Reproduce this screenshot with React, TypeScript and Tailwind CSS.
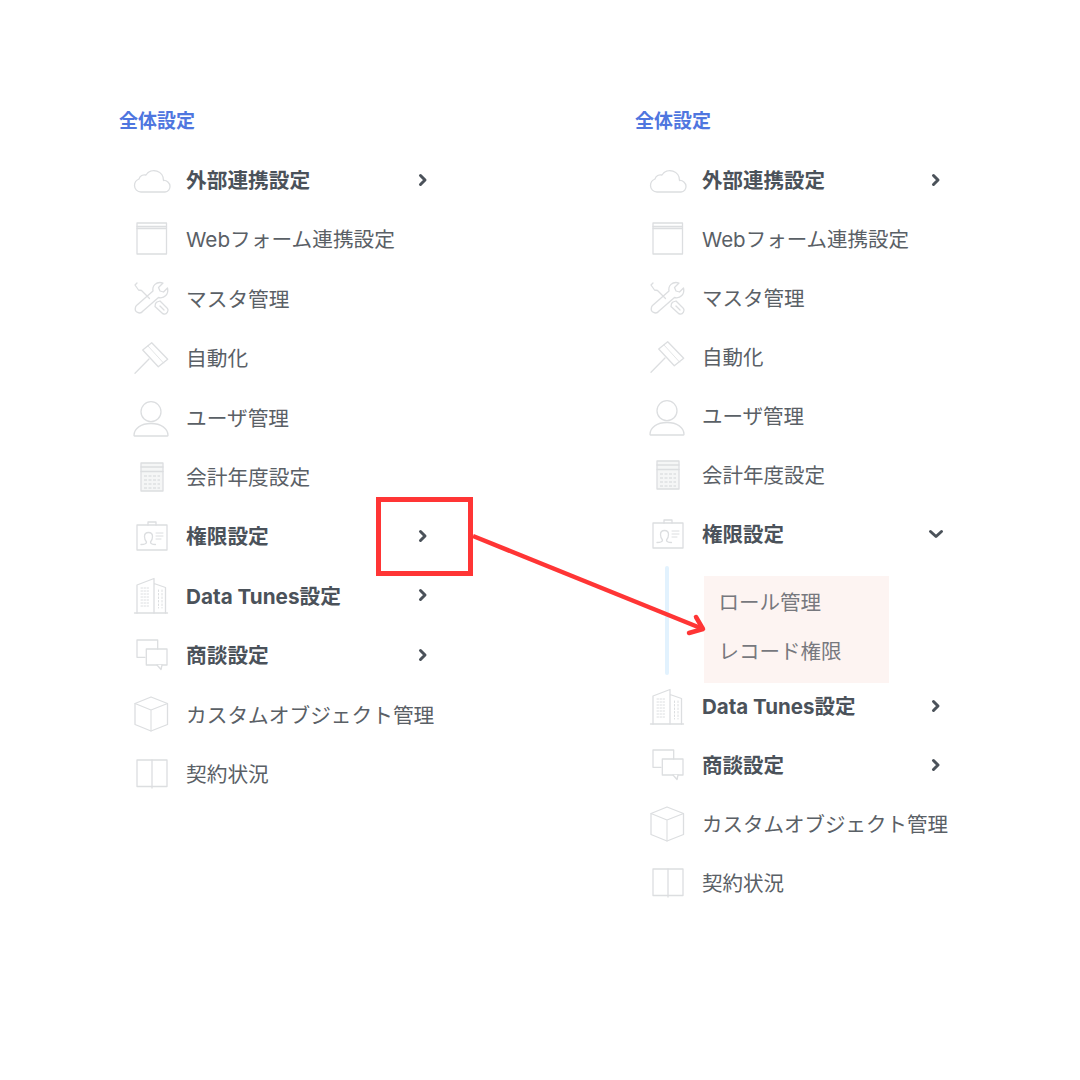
import React from "react";

const Svg = ({ children }: { children: React.ReactNode }) => (
  <svg width="40" height="40" viewBox="0 0 40 40" fill="none" stroke="#dcdee0" strokeWidth="1.300" strokeLinecap="round" strokeLinejoin="round">
    {children}
  </svg>
);

const icons: Record<string, React.ReactNode> = {
  cloud: <Svg><path d="M10 32h24a5.500 5.500 0 0 0 5-6 6 6 0 0 0-6.500-5.500a9.500 9.500 0 0 0-17.500-5.500a6 6 0 0 0-7 4a7 7 0 0 0-4.500 6.500a6.500 6.500 0 0 0 6.500 6.500z" /></Svg>,
  window: <Svg><rect x="6" y="4" width="29.500" height="31" /><path d="M6 7.500h29.500M6 9.500h29.500" /></Svg>,
  tools: <Svg><path d="M6 5l-2 2 3.500 5 3 .5 8 8M26 24l3-1 7.500 7.500c1.500 2-.5 6-3.500 5.500-1 0-1.500-.5-2-1L24 28.500l.5-3 1.500-1.500z" /><path d="M22 13c-1-5 3-10 10-8l-4.500 4.500 1.500 3.500 3.500 1 4-4c1.500 6-3 11-9 9.500L12 33c-3 4-9 1-7.500-3.500 0-1 .5-1.500 1-2L22 13z" /><path d="M29 28l4 4" /></Svg>,
  gavel: <Svg><path d="M20.700 4.700L36.700 21.300L27.300 28.700L11.700 12Z" /><path d="M17 8l15.500 17" strokeWidth="0.800" /><path d="M4 35.300L18 21" /></Svg>,
  user: <Svg><circle cx="20" cy="14.700" r="10" /><path d="M3 38.500c0-7 7-12 17-12s17 5 17 12c0 .3-.2.500-.5.500h-33c-.3 0-.5-.2-.5-.5z" /></Svg>,
  calc: <Svg><rect x="10" y="6" width="22" height="28" fill="#f5f6f6" /><path d="M10 10h22M10 14.500h22" /><path d="M13 19h16M13 23h16M13 27h16M13 31h16" strokeDasharray="3 1.500" strokeWidth="2.200" strokeLinecap="butt" stroke="#e4e6e7" /></Svg>,
  card: <Svg><rect x="6" y="9" width="30" height="25" /><path d="M17 9V6h8v3" /><path d="M10 28.500c3 0 5.500-1 5.500-2.500c-1.500-1.500-2-3-2-5.500c0-2.500 1.500-4 4-4s4 1.500 4 4c0 2.500-.5 4-2 5.500c0 1.500 2.500 2.500 5 2.500" /><path d="M25 17h7M25 20h7M25 23h5" strokeWidth="1" /></Svg>,
  building: <Svg><path d="M3.500 38h33" /><path d="M6 38V10l17-6.500V38M23 8.500l11.500 4V38" /><path d="M10 13h9M10 16h9M10 19h9M10 22h9M10 25h9M10 28h9M10 31h9" strokeDasharray="1.500 1.500" strokeWidth="1" /><path d="M27.500 15v18M31 15v18" strokeDasharray="1.500 2" strokeWidth="1" /></Svg>,
  chat: <Svg><path d="M14 22.300H6V5h20.700v9" /><rect x="15.300" y="14" width="20.700" height="16" /><path d="M26 30l4 4.500 1-4.500" fill="#fff" /></Svg>,
  cube: <Svg><path d="M20 3L36.500 9.500V30.500L20 37L4 30.500V9.500Z" /><path d="M4 9.500L20 16L36.500 9.500M20 16V37" strokeWidth="1.100" /></Svg>,
  book: <Svg><rect x="6" y="6" width="30" height="26.500" /><path d="M21 6v28" /></Svg>,
};

const Chevron = ({ open }: { open?: boolean }) => (
  <svg width="16" height="16" viewBox="0 0 16 16" fill="none" stroke="#4b525a" strokeWidth="3" strokeLinecap="round" strokeLinejoin="round">
    <path d={open ? "M2.500 5.500L8 10.500L13.500 5.500" : "M5.500 3.500L10 8L5.500 12.500"} />
  </svg>
);

type RowProps = { icon: string; label: string; bold?: boolean; chevron?: boolean; open?: boolean; pitch: string; width: string; size: string };

const Row = ({ icon, label, bold, chevron, open, pitch, width, size }: RowProps) => (
  <div className={`flex items-center ${pitch} ${width}`}>
    <div className="ml-[12px] mr-[15px] flex-none w-[40px] h-[40px]">{icons[icon]}</div>
    <span className={`flex-1 whitespace-nowrap pt-[3.500px] ${size} leading-none ${bold ? "font-bold text-[#4b525a]" : "font-normal text-[#5a6066]"}`}>{label}</span>
    {chevron && <Chevron open={open} />}
  </div>
);

const Heading = () => (
  <div className="h-[42px] pt-[1.500px] text-[19px] leading-[24px] font-bold text-[#4f76df]">全体設定</div>
);

export default function App() {
  const left = { pitch: "h-[59.4px]", width: "w-[312px]", size: "text-[20.7px]" };
  const right = { pitch: "h-[59px]", width: "w-[309px]", size: "text-[20.5px]" };
  return (
    <div className="relative flex w-[1080px] h-[1080px] bg-white pt-[108px] font-['Inter','Noto_Sans_CJK_JP',sans-serif]">
      <div className="ml-[119px] w-[516px] flex-none">
        <Heading />
        <Row {...left} icon="cloud" label="外部連携設定" bold chevron />
        <Row {...left} icon="window" label="Webフォーム連携設定" />
        <Row {...left} icon="tools" label="マスタ管理" />
        <Row {...left} icon="gavel" label="自動化" />
        <Row {...left} icon="user" label="ユーザ管理" />
        <Row {...left} icon="calc" label="会計年度設定" />
        <Row {...left} icon="card" label="権限設定" bold chevron />
        <Row {...left} icon="building" label="Data Tunes設定" bold chevron />
        <Row {...left} icon="chat" label="商談設定" bold chevron />
        <Row {...left} icon="cube" label="カスタムオブジェクト管理" />
        <Row {...left} icon="book" label="契約状況" />
      </div>
      <div className="flex-none">
        <Heading />
        <Row {...right} icon="cloud" label="外部連携設定" bold chevron />
        <Row {...right} icon="window" label="Webフォーム連携設定" />
        <Row {...right} icon="tools" label="マスタ管理" />
        <Row {...right} icon="gavel" label="自動化" />
        <Row {...right} icon="user" label="ユーザ管理" />
        <Row {...right} icon="calc" label="会計年度設定" />
        <Row {...right} icon="card" label="権限設定" bold chevron open />
        <div className="flex h-[113px]">
          <div className="ml-[30px] mt-[3px] w-[4px] h-[109px] rounded-full bg-[#e2f2fe] flex-none" />
          <div className="ml-[35px] mt-[13px] flex flex-col w-[185px] h-[107px] flex-none bg-[#fdf4f2] pl-[14.500px] pt-[3px] text-[20.5px] leading-[48.500px] text-[#77787e] whitespace-nowrap">
            <span>ロール管理</span>
            <span>レコード権限</span>
          </div>
        </div>
        <Row {...right} icon="building" label="Data Tunes設定" bold chevron />
        <Row {...right} icon="chat" label="商談設定" bold chevron />
        <Row {...right} icon="cube" label="カスタムオブジェクト管理" />
        <Row {...right} icon="book" label="契約状況" />
      </div>

      <div className="absolute left-[376px] top-[497px] w-[97px] h-[79px] border-[5px] border-[#ff3535]" />
      <svg className="absolute left-0 top-0 pointer-events-none" width="1080" height="1080" fill="none" stroke="#ff3535" strokeWidth="4.500" strokeLinecap="round" strokeLinejoin="round">
        <path d="M473 536L703 629" strokeLinecap="butt" />
        <path d="M696 617L703 629L689 633" />
      </svg>
    </div>
  );
}
